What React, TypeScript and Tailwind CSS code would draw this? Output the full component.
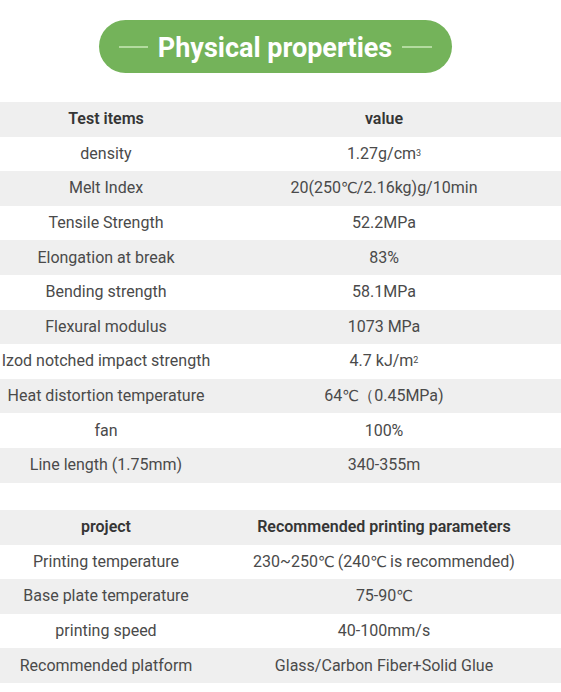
const C = () => <span className="font-['DejaVu_Sans',sans-serif] text-[15px] tracking-[-1px]">℃</span>;

const props: [string, React.ReactNode][] = [
  ["density", <>1.27g/cm<sup className="text-[9px] relative -top-[3px]">3</sup></>],
  ["Melt Index", <>20(250<C />/2.16kg)g/10min</>],
  ["Tensile Strength", "52.2MPa"],
  ["Elongation at break", "83%"],
  ["Bending strength", "58.1MPa"],
  ["Flexural modulus", "1073 MPa"],
  ["Izod notched impact strength", <>4.7 kJ/m<sup className="text-[9px] relative -top-[3px]">2</sup></>],
  ["Heat distortion temperature", <>64<C />（0.45MPa)</>],
  ["fan", "100%"],
  ["Line length (1.75mm)", "340-355m"],
];

const params: [string, React.ReactNode][] = [
  ["Printing temperature", <>230~250<C /> (240<C /> is recommended)</>],
  ["Base plate temperature", <>75-90<C /></>],
  ["printing speed", "40-100mm/s"],
  ["Recommended platform", "Glass/Carbon Fiber+Solid Glue"],
];

function Row({ k, v, gray }: { k: React.ReactNode; v: React.ReactNode; gray: boolean }) {
  return (
    <div className={`grid grid-cols-[212px_1fr] h-[34.6px] items-center ${gray ? "bg-[#efefef]" : "bg-white"}`}>
      <div className="text-center whitespace-nowrap">{k}</div>
      <div className="text-center pr-[5px] whitespace-nowrap">{v}</div>
    </div>
  );
}

export default function App() {
  return (
    <div className="w-[561px] h-[692px] bg-white text-[#4a4a4a] font-['Roboto',sans-serif] overflow-hidden">
      <div className="pt-5 flex justify-center pr-[10px]">
        <div className="w-[353px] h-[53px] rounded-full bg-[#74b35a] flex items-center justify-center gap-[10px]">
          <span className="w-[29px] h-[2px] bg-[#b3db9f]" />
          <span className="text-white font-bold text-[27px] leading-none pt-[3px]">Physical properties</span>
          <span className="w-[30px] h-[2px] bg-[#b3db9f]" />
        </div>
      </div>

      <div className="mt-[29px] text-[16px]">
        <div className="grid grid-cols-[212px_1fr] h-[34.6px] items-center bg-[#efefef] font-semibold text-[#353535]">
          <div className="text-center">Test items</div>
          <div className="text-center pr-[5px]">value</div>
        </div>
        {props.map(([k, v], i) => (
          <Row key={i} k={k} v={v} gray={i % 2 === 1} />
        ))}
      </div>

      <div className="mt-[27px] text-[16px]">
        <div className="grid grid-cols-[212px_1fr] h-[35px] items-center bg-[#efefef] font-semibold text-[#353535]">
          <div className="text-center">project</div>
          <div className="text-center pr-[5px] whitespace-nowrap">Recommended printing parameters</div>
        </div>
        {params.map(([k, v], i) => (
          <Row key={i} k={k} v={v} gray={i % 2 === 1} />
        ))}
      </div>
    </div>
  );
}
